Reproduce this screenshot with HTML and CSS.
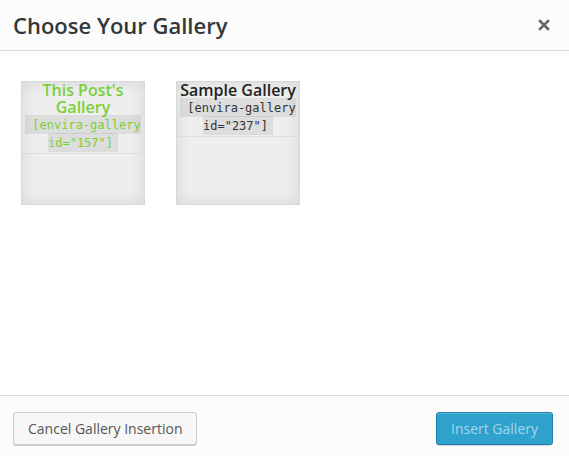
FILE: index.html
```html
<!DOCTYPE html>
<html lang="en">
<head>
	<meta charset="UTF-8">
	<meta name="viewport" content="width=device-width, initial-scale=1.0">
	<title>Choose Your Gallery</title>
	<link rel="stylesheet" href="styles.css">
</head>
<body>
	<div class="modal">
		<!-- Header -->
		<div class="modal_title">
			<h1>Choose Your Gallery</h1>
			<button type="button" class="close_btn" aria-label="Close">
				<svg width="12" height="12" viewBox="0 0 12 12"><path d="M2 2 L10 10 M10 2 L2 10" stroke="#666" stroke-width="2.6" stroke-linecap="square"/></svg>
			</button>
		</div>

		<!-- Gallery list -->
		<div class="modal_content">
			<div class="gallery_item selected">
				<div class="gallery_head">
					<div class="gallery_name">This Post's Gallery</div>
					<code>[envira-gallery id="157"]</code>
				</div>
			</div>
			<div class="gallery_item">
				<div class="gallery_head">
					<div class="gallery_name">Sample Gallery</div>
					<code>[envira-gallery id="237"]</code>
				</div>
			</div>
		</div>

		<!-- Footer -->
		<div class="modal_toolbar">
			<button type="button" class="btn">Cancel Gallery Insertion</button>
			<button type="button" class="btn btn_primary">Insert Gallery</button>
		</div>
	</div>
</body>
</html>
```

FILE: styles.css
```css
html, body {
	margin: 0;
	height: 100%;
	background: #fff;
	font-family: "Open Sans", "Liberation Sans", sans-serif;
}
.modal {
	display: flex;
	flex-direction: column;
	height: 100%;
}
.modal_title {
	display: flex;
	justify-content: space-between;
	align-items: center;
	height: 50px;
	padding: 0 19px 0 13px;
	border-bottom: 1px solid #ddd;
	background: #fcfcfc;
}
.modal_title h1 {
	margin: 0;
	font-size: 22px;
	font-weight: 600;
	color: #32373c;
	line-height: 50px;
}
.close_btn {
	border: 0;
	background: none;
	padding: 0;
	width: 12px;
	height: 12px;
	display: flex;
}
.modal_content {
	flex: 1;
	display: flex;
	align-items: flex-start;
	gap: 31px;
	padding: 30px 21px;
}
.gallery_item {
	width: 122px;
	height: 122px;
	border: 1px solid #d8d8d8;
	background: #eee;
	box-shadow: inset 0 0 15px rgba(0, 0, 0, 0.1);
}
.gallery_head {
	text-align: center;
	padding: 0 2px 1px;
	border-bottom: 1px solid #ddd;
	color: #333;
	font-size: 12px;
	line-height: 18px;
}
.gallery_name {
	font-size: 16px;
	font-weight: 600;
	line-height: 17px;
	color: #222;
}
.gallery_head code {
	font-family: "DejaVu Sans Mono", "Liberation Mono", monospace;
	font-size: 12px;
	line-height: 18px;
	padding: 3px 5px 2px 7px;
	background: rgba(0, 0, 0, 0.07);
}
.selected .gallery_name,
.selected code {
	color: #7ad03a;
}
.modal_toolbar {
	flex: none;
	display: flex;
	justify-content: space-between;
	align-items: flex-start;
	height: 44px;
	padding: 16px 16px 0 13px;
	border-top: 1px solid #ddd;
	background: #fcfcfc;
}
.btn {
	height: 33px;
	padding: 0 14px;
	font-family: inherit;
	font-size: 14px;
	color: #555;
	background: #f7f7f7;
	border: 1px solid #ccc;
	border-radius: 3px;
	box-shadow: 0 1px 0 #ccc;
}
.btn_primary {
	background: #2ea2cc;
	border-color: #1f7fa6;
	color: #a5d5ea;
	box-shadow: inset 0 1px 0 rgba(120, 200, 230, 0.5), 0 1px 0 rgba(0, 0, 0, 0.15);
}
```
